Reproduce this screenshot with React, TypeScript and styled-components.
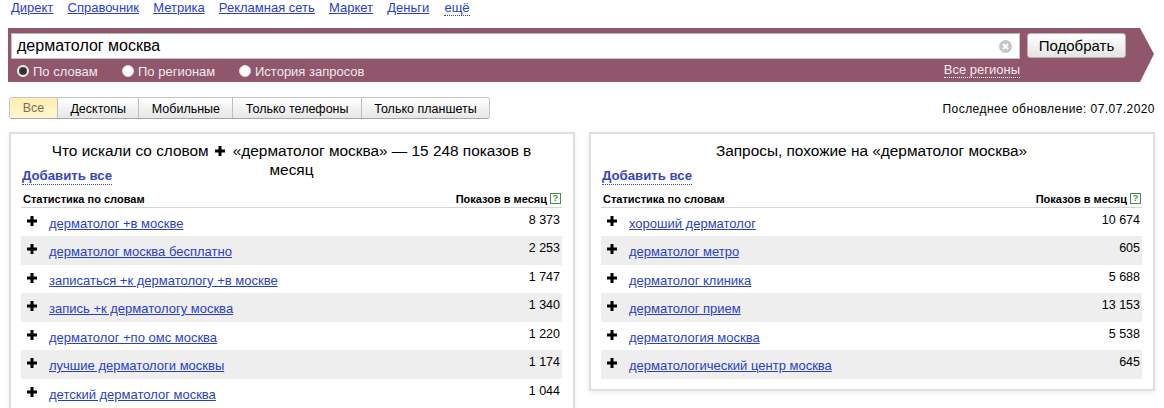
import React from "react";
import styled, { createGlobalStyle } from "styled-components";

const GlobalStyle = createGlobalStyle`
  html, body {
    margin: 0;
    height: 408px;
    overflow: hidden;
    background: #fff;
    font-family: "Liberation Sans", Arial, sans-serif;
    color: #000;
  }
`;

const Page = styled.div`
  width: 1164px;
  height: 408px;
  overflow: hidden;
`;

const Nav = styled.nav`
  display: flex;
  gap: 14.2px;
  height: 28px;
  padding: 0 0 0 11px;
  font-size: 13px;
  line-height: 15px;
`;

const NavLink = styled.a<{ $dotted?: boolean }>`
  color: #2a3fc4;
  text-decoration: ${(p) => (p.$dotted ? "none" : "underline")};
  border-bottom: ${(p) => (p.$dotted ? "1px dotted #2a3fc4" : "none")};
  height: ${(p) => (p.$dotted ? "15px" : "auto")};
  margin-left: ${(p) => (p.$dotted ? "1px" : "0")};
`;

const Band = styled.div`
  box-sizing: border-box;
  width: 1146px;
  height: 54px;
  margin-left: 8px;
  padding: 5px 0 0 3px;
  background: #8f566c;
  clip-path: polygon(0 0, 1132px 0, 1146px 26px, 1132px 100%, 0 100%);
`;

const SearchRow = styled.div`
  display: flex;
  gap: 7px;
`;

const InputBox = styled.div`
  box-sizing: border-box;
  width: 1009px;
  height: 26px;
  display: flex;
  align-items: center;
  justify-content: space-between;
  padding: 0 7px 0 5px;
  background: #fff;
  border: 1px solid #c9c4c6;
  border-top-color: #b5b0b2;
  font-size: 16px;
`;

const SearchButton = styled.button`
  box-sizing: border-box;
  width: 99px;
  height: 25px;
  padding: 0;
  border: 1px solid #b9b3b5;
  border-radius: 3px;
  background: linear-gradient(#ffffff, #e4e4e4);
  font-family: inherit;
  font-size: 15px;
  color: #000;
`;

const OptionsRow = styled.div`
  display: flex;
  align-items: center;
  height: 24px;
  padding-left: 6px;
  font-size: 13px;
  color: #f1eaed;
`;

const Option = styled.label<{ $w: number }>`
  display: flex;
  align-items: center;
  gap: 4px;
  width: ${(p) => p.$w}px;
`;

const Radio = styled.span<{ $checked?: boolean }>`
  box-sizing: border-box;
  width: 12px;
  height: 12px;
  border-radius: 50%;
  background: ${(p) => (p.$checked ? "#333" : "#fff")};
  border: ${(p) => (p.$checked ? "2px solid #eee" : "1px solid #ddd")};
  box-shadow: ${(p) => (p.$checked ? "0 0 0 1px #444 inset" : "none")};
`;

const Regions = styled.a`
  margin-left: auto;
  margin-right: 134px;
  color: #f1eaed;
  border-bottom: 1px dotted #fff;
  line-height: 15px;
  margin-top: -3px;
`;

const FilterRow = styled.div`
  display: flex;
  align-items: center;
  justify-content: space-between;
  height: 22px;
  margin: 15px 0 13px 9px;
  padding-right: 9px;
`;

const Tabs = styled.div`
  box-sizing: border-box;
  display: flex;
  height: 22px;
  border: 1px solid #c4c4c4;
  border-bottom-color: #a8a8a8;
  border-radius: 3px;
  overflow: hidden;
`;

const Tab = styled.div<{ $active?: boolean }>`
  display: flex;
  align-items: center;
  justify-content: center;
  width: ${(p) => (p.$active ? "47px" : "auto")};
  padding: ${(p) => (p.$active ? "0" : "1px 12.4px 0")};
  font-size: 12.5px;
  color: ${(p) => (p.$active ? "#7a7050" : "#000")};
  background: ${(p) =>
    p.$active
      ? "linear-gradient(#ffeeb0, #fff5d2)"
      : "linear-gradient(#ffffff, #e6e6e6)"};
  border-left: ${(p) => (p.$active ? "none" : "1px solid #bdbdbd")};
`;

const Updated = styled.div`
  padding-top: 1px;
  font-size: 12px;
  letter-spacing: 0.44px;
`;

const Columns = styled.div`
  display: grid;
  grid-template-columns: 566px 566px;
  gap: 14px;
  align-items: start;
  margin-left: 9px;
`;

const Panel = styled.section<{ $open?: boolean }>`
  box-sizing: border-box;
  height: ${(p) => (p.$open ? "300px" : "259px")};
  padding: 0 11px 0 10px;
  border: 2px solid #dedede;
  box-shadow: 0 2px 6px rgba(0, 0, 0, 0.08);
  background: #fff;
`;

const Title = styled.h2`
  height: 25px;
  margin: 0;
  padding: 7px 30px 0;
  font-size: 15.4px;
  font-weight: 400;
  line-height: 19px;
  text-align: center;
`;

const AddAll = styled.a`
  position: relative;
  display: inline-block;
  margin: 0 0 0 1px;
  font-size: 13.2px;
  font-weight: 700;
  line-height: 16px;
  color: #3a45c0;
  border-bottom: 1px dotted #3a45c0;
`;

const TableHead = styled.div`
  display: flex;
  justify-content: space-between;
  align-items: center;
  height: 23px;
  box-sizing: border-box;
  padding: 5px 1px 0 2px;
  border-bottom: 1px solid #d4d4dc;
  font-size: 11px;
  font-weight: 700;
`;

const HeadRight = styled.span`
  display: flex;
  align-items: center;
  gap: 3px;
`;

const Help = styled.span`
  box-sizing: border-box;
  width: 11px;
  height: 11px;
  border: 1px solid #3e8e4c;
  color: #3e8e4c;
  font-size: 9px;
  line-height: 9px;
  text-align: center;
`;

const Row = styled.div`
  display: flex;
  align-items: flex-start;
  height: 28.45px;
  padding: 0 2px 0 6px;
  &:nth-child(even) {
    background: #eeeeee;
  }
`;

const Plus = styled.svg`
  flex: none;
  width: 10px;
  height: 10px;
  margin-top: 8px;
`;

const WordLink = styled.a`
  margin: 8px 0 0 12px;
  font-size: 13px;
  line-height: 15px;
  color: #2a3fc4;
  text-decoration: underline;
`;

const Count = styled.span`
  margin: 5px 0 0 auto;
  font-size: 12.5px;
  line-height: 15px;
`;

const InlinePlus = styled.svg`
  width: 10px;
  height: 10px;
  margin: 0 8px 0 6px;
`;

const left: [string, string][] = [
  ["дерматолог +в москве", "8 373"],
  ["дерматолог москва бесплатно", "2 253"],
  ["записаться +к дерматологу +в москве", "1 747"],
  ["запись +к дерматологу москва", "1 340"],
  ["дерматолог +по омс москва", "1 220"],
  ["лучшие дерматологи москвы", "1 174"],
  ["детский дерматолог москва", "1 044"],
];

const right: [string, string][] = [
  ["хороший дерматолог", "10 674"],
  ["дерматолог метро", "605"],
  ["дерматолог клиника", "5 688"],
  ["дерматолог прием", "13 153"],
  ["дерматология москва", "5 538"],
  ["дерматологический центр москва", "645"],
];

const plusPath = "M3.5 0h3v3.5H10v3H6.5V10h-3V6.5H0v-3h3.5z";

const ClearIcon = () => (
  <svg width="13" height="13" viewBox="0 0 13 13">
    <circle cx="6.5" cy="6.5" r="6.5" fill="#c6c6c6" />
    <path d="M4 4l5 5M9 4l-5 5" stroke="#fff" strokeWidth="2" />
  </svg>
);

const WordTable = ({ rows }: { rows: [string, string][] }) => (
  <>
    <TableHead>
      <span>Статистика по словам</span>
      <HeadRight>
        Показов в месяц<Help>?</Help>
      </HeadRight>
    </TableHead>
    <div>
      {rows.map(([word, count]) => (
        <Row key={word}>
          <Plus viewBox="0 0 10 10">
            <path d={plusPath} fill="#000" />
          </Plus>
          <WordLink>{word}</WordLink>
          <Count>{count}</Count>
        </Row>
      ))}
    </div>
  </>
);

const App = () => (
  <Page>
    <GlobalStyle />
    <Nav>
      {["Директ", "Справочник", "Метрика", "Рекламная сеть", "Маркет", "Деньги"].map((item) => (
        <NavLink key={item}>{item}</NavLink>
      ))}
      <NavLink $dotted>ещё</NavLink>
    </Nav>
    <Band>
      <SearchRow>
        <InputBox>
          дерматолог москва
          <ClearIcon />
        </InputBox>
        <SearchButton>Подобрать</SearchButton>
      </SearchRow>
      <OptionsRow>
        <Option $w={105}>
          <Radio $checked />
          По словам
        </Option>
        <Option $w={117}>
          <Radio />
          По регионам
        </Option>
        <Option $w={140}>
          <Radio />
          История запросов
        </Option>
        <Regions>Все регионы</Regions>
      </OptionsRow>
    </Band>
    <FilterRow>
      <Tabs>
        <Tab $active>Все</Tab>
        <Tab>Десктопы</Tab>
        <Tab>Мобильные</Tab>
        <Tab>Только телефоны</Tab>
        <Tab>Только планшеты</Tab>
      </Tabs>
      <Updated>Последнее обновление: 07.07.2020</Updated>
    </FilterRow>
    <Columns>
      <Panel $open>
        <Title>
          Что искали со словом
          <InlinePlus viewBox="0 0 10 10">
            <path d={plusPath} fill="#000" />
          </InlinePlus>
          «дерматолог москва» — 15 248 показов в месяц
        </Title>
        <AddAll>Добавить все</AddAll>
        <WordTable rows={left} />
      </Panel>
      <Panel>
        <Title>Запросы, похожие на «дерматолог москва»</Title>
        <AddAll>Добавить все</AddAll>
        <WordTable rows={right} />
      </Panel>
    </Columns>
  </Page>
);

export default App;
